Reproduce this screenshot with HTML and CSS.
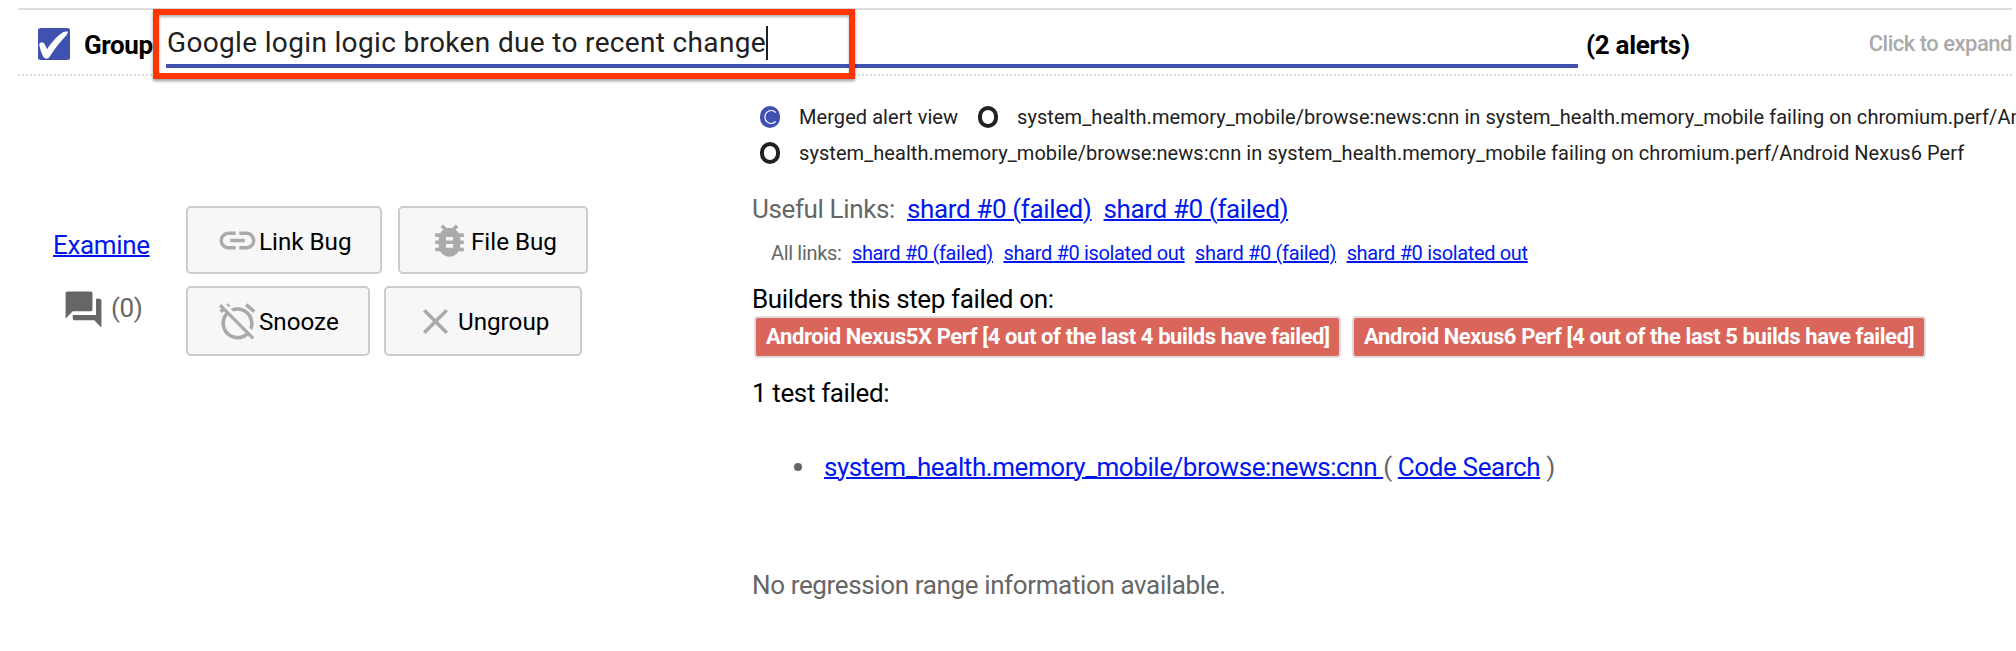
FILE: index.html
```html
<!DOCTYPE html>
<html lang="en">
<head>
<meta charset="utf-8">
<title>Alerts</title>
<link rel="stylesheet" href="styles.css">
</head>
<body>
<header class="group-header">
  <svg class="checkbox" viewBox="0 0 32 32"><rect width="32" height="32" rx="2.5" fill="#4051b0"/><path d="M1.2 16.5C2.5 13.2 5.8 13.5 7.3 17.5L9.2 21.2C13 15 18.500 8.500 25 4.300C26.500 3.500 28.500 3.300 30 3.700C29.500 6 28.800 6.800 27.500 8.200C21.500 14.500 16.500 21 11.500 29C10 31 7 31 5.500 29C3.500 25.500 2 21 1.200 16.500Z" fill="#fff"/></svg>
  <span class="group-label">Group</span>
  <div class="name-field"><span class="name-text">Google login logic broken due to recent change</span><span class="caret"></span></div>
  <span class="alert-count">(2 alerts)</span>
  <span class="hint">Click to expand</span>
  <div class="highlight"></div>
</header>
<main class="content">
  <aside class="side">
    <div class="side-links">
      <a class="examine">Examine</a>
      <div class="comments"><svg class="icon" viewBox="0 0 24 24"><path d="M21 6h-2v9H6v2c0 .55.45 1 1 1h11l4 4V7c0-.55-.45-1-1-1zm-4 6V3c0-.55-.45-1-1-1H3c-.55 0-1 .45-1 1v14l4-4h10c.55 0 1-.45 1-1z"/></svg><span class="comment-count">(0)</span></div>
    </div>
    <div class="actions">
      <div class="action-row">
        <div class="btn link-bug"><svg class="icon" viewBox="0 0 24 24"><path d="M3.900 12c0-1.710 1.390-3.100 3.100-3.100h4V7H7c-2.760 0-5 2.240-5 5s2.240 5 5 5h4v-1.900H7c-1.710 0-3.100-1.390-3.100-3.100zM8 13h8v-2H8v2zm9-6h-4v1.900h4c1.710 0 3.100 1.390 3.100 3.100s-1.390 3.100-3.100 3.100h-4V17h4c2.760 0 5-2.240 5-5s-2.240-5-5-5z"/></svg><span>Link Bug</span></div>
        <div class="btn file-bug"><svg class="icon" viewBox="0 0 24 24"><path d="M20 8h-2.810c-.45-.78-1.070-1.450-1.820-1.960L17 4.410 15.590 3l-2.170 2.170C12.960 5.060 12.490 5 12 5c-.49 0-.96.060-1.410.170L8.410 3 7 4.410l1.620 1.630C7.880 6.550 7.260 7.220 6.810 8H4v2h2.090c-.05.33-.09.66-.09 1v1H4v2h2v1c0 .34.040.67.090 1H4v2h2.810c1.040 1.790 2.970 3 5.190 3s4.150-1.210 5.190-3H20v-2h-2.090c.05-.33.09-.66.09-1v-1h2v-2h-2v-1c0-.34-.04-.67-.09-1H20V8zm-6 8h-4v-2h4v2zm0-4h-4v-2h4v2z"/></svg><span>File Bug</span></div>
      </div>
      <div class="action-row tall">
        <div class="btn snooze"><svg class="icon" viewBox="0 0 24 24"><path d="M12 6c3.870 0 7 3.130 7 7 0 .84-.16 1.650-.43 2.400l1.520 1.520c.58-1.190.91-2.510.91-3.920 0-4.970-4.030-9-9-9-1.410 0-2.730.33-3.920.91L9.600 6.430C10.350 6.160 11.160 6 12 6zm10-.28l-4.600-3.860-1.290 1.530 4.600 3.860L22 5.720zM2.920 2.290L1.650 3.570 2.980 4.900l-1.110.93 1.420 1.420 1.110-.94.8.8C3.830 8.690 3 10.750 3 13c0 4.970 4.020 9 9 9 2.250 0 4.310-.83 5.890-2.200l2.200 2.200 1.270-1.270L3.890 3.270l-.97-.98zm13.550 16.100C15.260 19.390 13.700 20 12 20c-3.870 0-7-3.130-7-7 0-1.700.61-3.260 1.610-4.470l9.860 9.860zM8.020 3.280L6.600 1.860l-.86.71 1.420 1.420.86-.71z"/></svg><span>Snooze</span></div>
        <div class="btn ungroup"><svg class="icon" viewBox="0 0 24 24"><path d="M19 6.410L17.590 5 12 10.590 6.410 5 5 6.410 10.590 12 5 17.590 6.410 19 12 13.410 17.590 19 19 17.590 13.410 12z"/></svg><span>Ungroup</span></div>
      </div>
    </div>
  </aside>
  <section class="details">
    <div class="views">
      <div class="view-row">
        <svg class="radio" viewBox="0 0 20 22"><rect width="20" height="22" rx="10" fill="#4051b0"/><path d="M15.700 6.500A6.300 6.500 0 1 0 15.700 15.500" fill="none" stroke="#fff" stroke-width="1.200"/></svg>
        <span class="view-label">Merged alert view</span>
        <svg class="radio second" viewBox="0 0 20 22"><rect x="2" y="2" width="16" height="18" rx="8" fill="none" stroke="#212121" stroke-width="4"/></svg>
        <span class="view-label">system_health.memory_mobile/browse:news:cnn in system_health.memory_mobile failing on chromium.perf/Android Nexus5X Perf</span>
      </div>
      <div class="view-row">
        <svg class="radio" viewBox="0 0 20 22"><rect x="2" y="2" width="16" height="18" rx="8" fill="none" stroke="#212121" stroke-width="4"/></svg>
        <span class="view-label">system_health.memory_mobile/browse:news:cnn in system_health.memory_mobile failing on chromium.perf/Android Nexus6 Perf</span>
      </div>
    </div>
    <div class="useful"><span>Useful Links:</span><a>shard #0 (failed)</a><a>shard #0 (failed)</a></div>
    <div class="all-links"><span>All links:</span><a>shard #0 (failed)</a><a>shard #0 isolated out</a><a>shard #0 (failed)</a><a>shard #0 isolated out</a></div>
    <div class="heading">Builders this step failed on:</div>
    <div class="builders"><div class="builder first"><span>Android Nexus5X Perf [4 out of the last 4 builds have failed]</span></div><div class="builder last"><span>Android Nexus6 Perf [4 out of the last 5 builds have failed]</span></div></div>
    <div class="heading tests">1 test failed:</div>
    <div class="test"><i class="bullet"></i><span><a class="test-name">system_health.memory_mobile/browse:news:cnn </a>( <a>Code Search</a> )</span></div>
    <div class="regression">No regression range information available.</div>
  </section>
</main>
</body>
</html>
```
FILE: styles.css
```css
* { box-sizing: border-box; }
body { margin: 0; width: 2016px; height: 651px; overflow: hidden; background: #fff; font-family: Roboto, sans-serif; font-size: 24px; color: #000; white-space: nowrap; }
a { color: #0018ee; text-decoration: underline; text-decoration-thickness: 2px; }
.group-header { position: relative; display: flex; height: 68px; margin: 8px 4px 0 18px; border-top: 2px solid #dcdcdc; border-bottom: 2px dotted #dcdcdc; }
.checkbox { width: 32px; height: 32px; margin: 18px 0 0 20px; }
.group-label { width: 82px; margin-left: 14px; padding-top: 21px; font-size: 26px; line-height: 28px; letter-spacing: -.4px; font-weight: 700; }
.name-field { display: flex; width: 1412px; height: 58px; border-bottom: 4px solid #4051b0; color: #212121; }
.name-text { padding: 17px 0 0 1px; font-size: 28px; line-height: 32px; letter-spacing: .34px; }
.caret { width: 2px; height: 34px; margin-top: 16px; background: #212121; }
.alert-count { margin-left: 8px; padding-top: 21px; font-size: 26px; line-height: 28px; letter-spacing: -.3px; font-weight: 700; }
.hint { margin-left: auto; padding-top: 20px; font-size: 22px; line-height: 28px; letter-spacing: -.5px; font-weight: 500; color: #aaa; }
.highlight { position: absolute; left: 135px; top: -1px; width: 702px; height: 70px; border: 6px solid #ff3502; box-shadow: 0 2px 3px rgba(0,0,0,.4), inset 0 2px 3px rgba(0,0,0,.3); }
.content { display: flex; }
.side { display: flex; width: 752px; padding-top: 130px; }
.side-links { width: 186px; font-size: 26px; letter-spacing: -.35px; color: #666; }
.examine { display: block; margin: 25px 0 0 53px; line-height: 28px; }
.comments { display: flex; margin: 29px 0 0 62px; }
.icon { flex: none; width: 43px; height: 43px; fill: #aaa; }
.comments .icon { fill: #666; }
.comment-count { padding: 6px 0 0 6px; line-height: 28px; }
.action-row { display: flex; margin-bottom: 12px; }
.btn { display: flex; align-items: center; height: 68px; padding-left: 28px; border: 2px solid #ccc; border-radius: 5px; background: #f7f7f7; font-size: 24.2px; }
.btn span { padding-top: 3px; }
.tall .btn { height: 70px; }
.tall span { padding-top: 1px; }
.link-bug { width: 196px; }
.file-bug { width: 190px; margin-left: 16px; }
.snooze { width: 184px; }
.ungroup { width: 198px; margin-left: 14px; }
.ungroup span { padding-left: 1px; }
.details { width: 1264px; overflow: hidden; }
.views { padding: 23px 0 0 8px; font-size: 20px; letter-spacing: .06px; color: #212121; }
.view-row { display: flex; align-items: center; height: 36px; }
.radio { flex: none; width: 20px; height: 22px; margin-right: 19px; }
.radio.second { margin-left: 20px; }
.useful, .heading, .test, .regression { font-size: 26px; line-height: 30px; letter-spacing: -.37px; color: #666; }
.useful { display: flex; gap: 12px; margin-top: 23px; }
.all-links { display: flex; gap: 10.5px; margin-top: 17px; padding-left: 19px; font-size: 20px; line-height: 24px; letter-spacing: -.34px; color: #666; }
.heading { margin-top: 19px; color: #000; }
.builders { display: flex; margin: 2px 0 0 2px; gap: 11px; }
.builder { height: 42px; padding-left: 10px; border: 2px solid #ddd; border-radius: 4px; background: #d9655b; color: #fff; font-size: 22px; line-height: 37px; letter-spacing: -.41px; font-weight: 700; }
.builder.first { width: 587px; }
.builder.last { width: 574px; }
.heading.tests { margin-top: 20px; }
.test { display: flex; align-items: center; margin-top: 44px; padding-left: 42px; }
.test-name { letter-spacing: -.43px; }
.bullet { width: 8px; height: 8px; margin-right: 22px; border-radius: 50%; background: #666; }
.regression { margin-top: 88px; }
```
